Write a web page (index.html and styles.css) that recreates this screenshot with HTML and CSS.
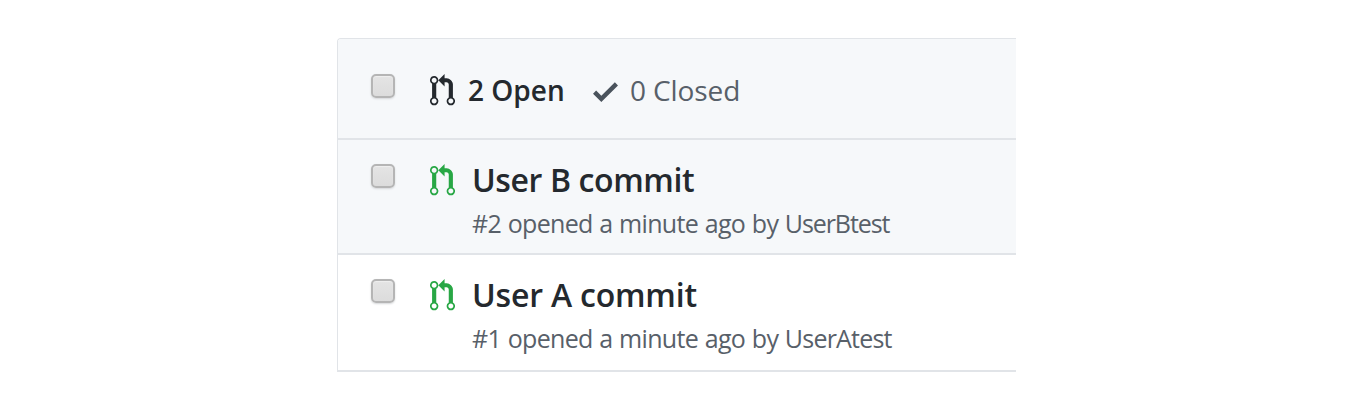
FILE: index.html
```
<!DOCTYPE html>
<html lang="en">
<head>
<meta charset="utf-8">
<title>Pull requests</title>
<link rel="stylesheet" href="styles.css">
</head>
<body>
<svg class="defs" width="0" height="0">
  <symbol id="pull" viewBox="0 0 12 16"><path d="M11 11.28V5c-.03-.78-.34-1.47-.94-2.06C9.46 2.35 8.78 2.03 8 2H7V0L4 3l3 3V4h1c.27.02.48.11.69.31.21.2.3.42.31.69v6.28A1.993 1.993 0 0 0 10 15a1.993 1.993 0 0 0 1-3.72zm-1 2.92c-.66 0-1.2-.55-1.2-1.2 0-.65.55-1.2 1.2-1.2.65 0 1.2.55 1.2 1.2 0 .65-.55 1.2-1.2 1.2zM4 3c0-1.11-.89-2-2-2a1.993 1.993 0 0 0-1 3.72v6.56A1.993 1.993 0 0 0 2 15a1.993 1.993 0 0 0 1-3.72V4.72c.59-.34 1-.98 1-1.72zm-.8 10c0 .66-.55 1.2-1.2 1.2-.65 0-1.2-.55-1.2-1.2 0-.65.55-1.2 1.2-1.2.65 0 1.2.55 1.2 1.2zM2 4.2C1.34 4.2.8 3.65.8 3c0-.65.55-1.2 1.2-1.2.65 0 1.2.55 1.2 1.2 0 .65-.55 1.2-1.2 1.2z"/></symbol>
</svg>
<main class="list">
  <header class="row head">
    <span class="check" role="checkbox" aria-checked="false"></span>
    <svg class="pull"><use href="#pull"/></svg>
    <span class="open">2 Open</span>
    <svg class="tick" viewBox="0 0 12 16"><path d="M12 5l-8 8-4-4 1.5-1.5L4 10l6.5-6.5z"/></svg>
    <span class="closed">0 Closed</span>
  </header>
  <section class="row item read">
    <span class="check" role="checkbox" aria-checked="false"></span>
    <svg class="pull green"><use href="#pull"/></svg>
    <div class="body">
      <div class="title">User B commit</div>
      <div class="meta">#2 opened a minute ago by <span class="author">UserBtest</span></div>
    </div>
  </section>
  <section class="row item last">
    <span class="check" role="checkbox" aria-checked="false"></span>
    <svg class="pull green"><use href="#pull"/></svg>
    <div class="body">
      <div class="title wide">User A commit</div>
      <div class="meta">#1 opened a minute ago by <span class="author wide">UserAtest</span></div>
    </div>
  </section>
</main>
</body>
</html>
```
FILE: styles.css
```
* { box-sizing: border-box; }
body {
  margin: 0;
  padding: 38px 0 0 337px;
  background: #fff;
  color: #24292e;
  font-family: "Open Sans", "Noto Sans", sans-serif;
}
.defs { display: block; }
.list {
  width: 679px;
  border: 1px solid #e1e4e8;
  border-right: 0;
  border-bottom: 0;
  border-radius: 4px 0 0 0;
  overflow: hidden;
}
.row {
  display: flex;
  align-items: flex-start;
  padding-left: 33px;
  border-bottom: 2px solid #e1e4e8;
  white-space: nowrap;
}
.head { height: 100.5px; padding-top: 35px; background: #f6f8fa; }
.item { height: 115px; padding-top: 24.5px; }
.read { background: #f6f8fa; }
.last { height: 117px; }
.check {
  width: 24px;
  height: 24px;
  flex: none;
  border: 2px solid #b5b5b5;
  border-radius: 5px;
  background: linear-gradient(#e4e4e4, #dcdcdc);
  box-shadow: inset 0 1px 1px #efefef, 0 1px 2px #d5d7d9;
}
.item .check { margin-top: -0.5px; }
.pull { width: 25px; height: 33.4px; flex: none; margin-left: 35px; fill: #24292e; }
.green { fill: #28a745; }
.open, .closed { font-size: 28px; line-height: 36px; margin-top: -2px; }
.open { width: 124px; margin-left: 13px; font-weight: 550; }
.tick { width: 25px; height: 33.3px; flex: none; margin: 1px 11px 0 1px; fill: #4a535c; }
.closed { color: #586069; letter-spacing: -.1px; margin-left: 1px; }
.body { margin-left: 17px; }
.title { margin-top: -6px; font-size: 32px; line-height: 44px; font-weight: 550; letter-spacing: -.4px; }
.title.wide { letter-spacing: -.2px; }
.meta { margin-top: 4px; font-size: 25px; line-height: 34px; color: #586069; letter-spacing: -.68px; word-spacing: .8px; }
.author { letter-spacing: -1.1px; }
.author.wide { letter-spacing: -.8px; }
```
